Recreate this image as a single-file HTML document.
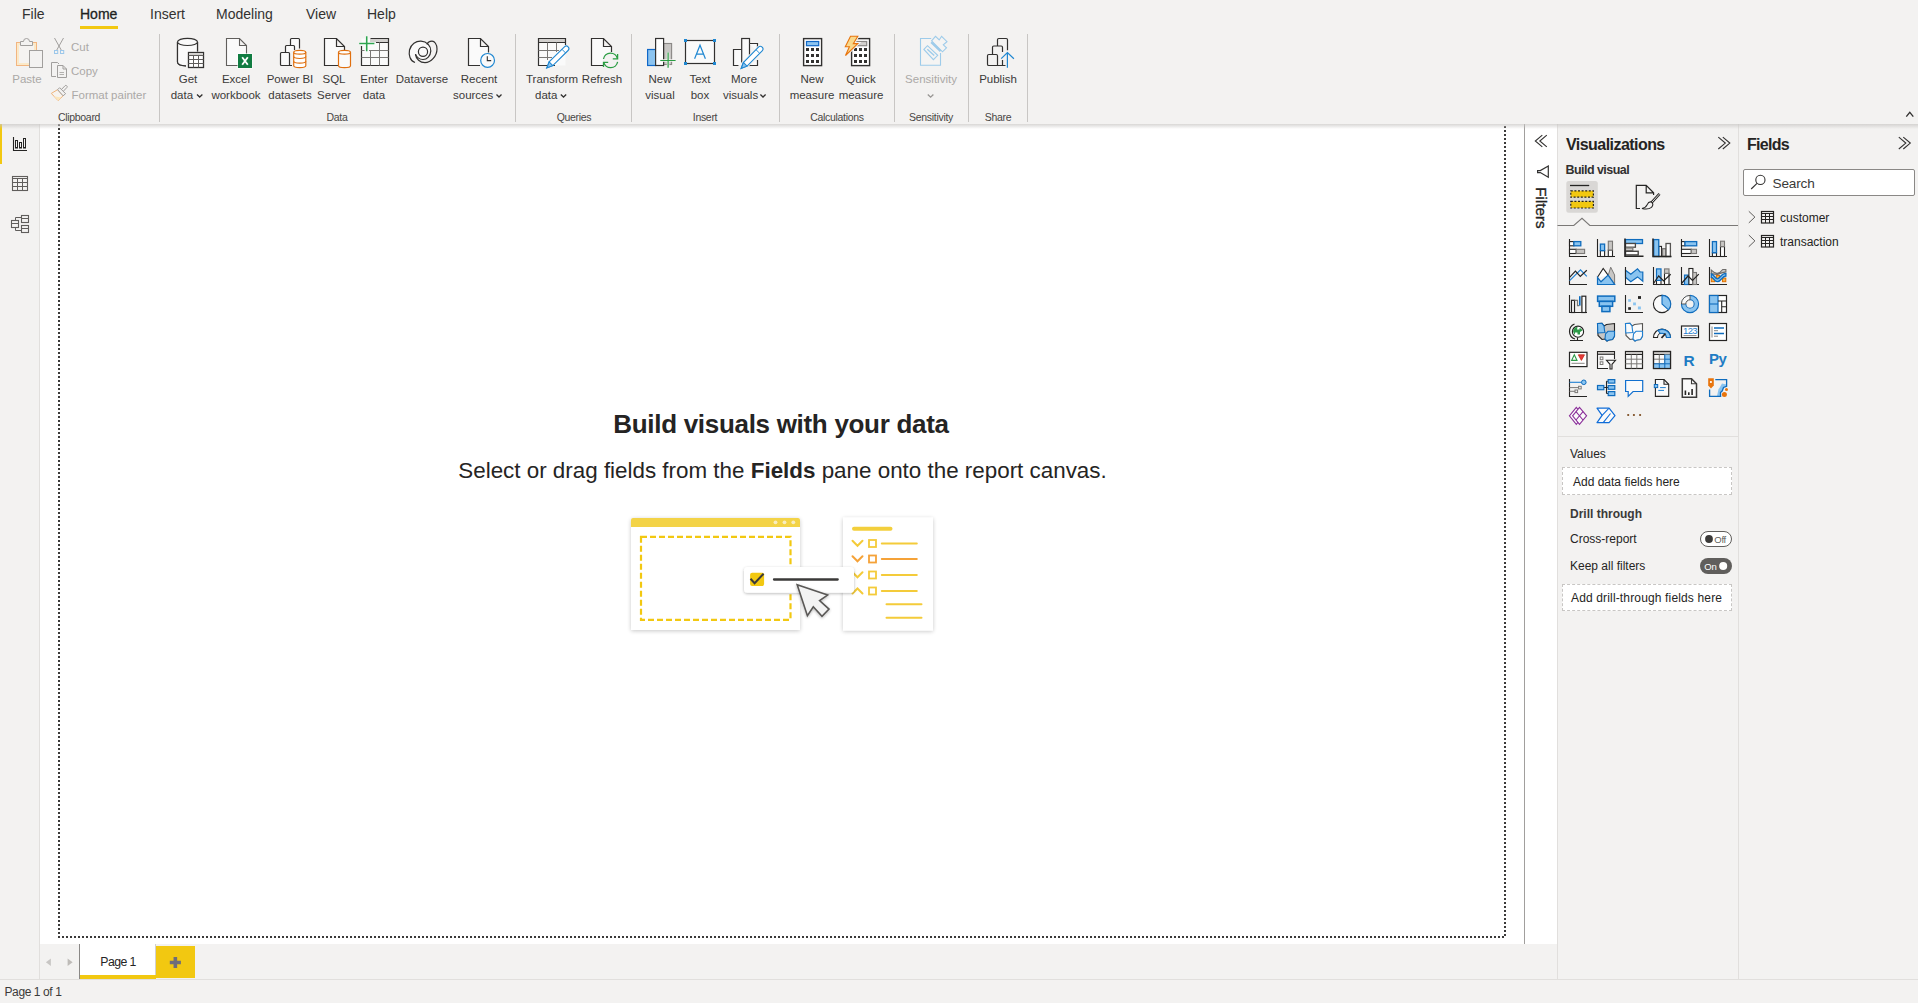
<!DOCTYPE html>
<html><head><meta charset="utf-8">
<style>
*{box-sizing:border-box;margin:0;padding:0}
html,body{width:1918px;height:1003px;overflow:hidden;background:#F3F2F1;font-family:"Liberation Sans",sans-serif;color:#252423;position:relative}
.a{position:absolute}
.t{position:absolute;white-space:nowrap}
.tab{font-size:14px;line-height:16px;top:6px;color:#323130}
.lbl{position:absolute;font-size:11.5px;line-height:16px;text-align:center;white-space:nowrap;width:100px;color:#3B3A39}
.grp{position:absolute;font-size:10.5px;letter-spacing:-0.3px;line-height:12px;text-align:center;white-space:nowrap;width:100px;top:111px;color:#484644}
.sep{position:absolute;top:34px;width:1px;height:88px;background:#C8C6C4}
.dis{color:#ABA9A7}
svg{position:absolute;overflow:visible}
</style></head><body>

<!-- ===== Top tabs ===== -->
<div class="t tab" style="left:22px">File</div>
<div class="t tab" style="left:80px;color:#201F1E;-webkit-text-stroke:0.3px #201F1E">Home</div>
<div class="a" style="left:80px;top:26px;width:38px;height:3px;background:#F2C811"></div>
<div class="t tab" style="left:150px">Insert</div>
<div class="t tab" style="left:216px">Modeling</div>
<div class="t tab" style="left:306px">View</div>
<div class="t tab" style="left:367px">Help</div>

<!-- ===== Ribbon ===== -->
<div id="ribbon">
<div class="sep" style="left:159px"></div>
<div class="sep" style="left:515px"></div>
<div class="sep" style="left:631px"></div>
<div class="sep" style="left:779px"></div>
<div class="sep" style="left:894px"></div>
<div class="sep" style="left:968px"></div>
<div class="sep" style="left:1027px"></div>

<div class="lbl dis" style="left:-23px;top:71px">Paste</div>
<div class="t dis" style="left:71px;top:39px;font-size:11.5px;line-height:16px">Cut</div>
<div class="t dis" style="left:71px;top:63px;font-size:11.5px;line-height:16px">Copy</div>
<div class="t dis" style="left:71.5px;top:87px;font-size:11.5px;line-height:16px">Format painter</div>
<div class="grp" style="left:29px">Clipboard</div>

<div class="lbl" style="left:138px;top:71px">Get</div>
<div class="t" style="left:170.7px;top:87px;font-size:11.5px;line-height:16px;color:#3B3A39">data</div>
<div class="lbl" style="left:186px;top:71px">Excel</div>
<div class="lbl" style="left:186px;top:87px">workbook</div>
<div class="lbl" style="left:240px;top:71px">Power BI</div>
<div class="lbl" style="left:240px;top:87px">datasets</div>
<div class="lbl" style="left:284px;top:71px">SQL</div>
<div class="lbl" style="left:284px;top:87px">Server</div>
<div class="lbl" style="left:324px;top:71px">Enter</div>
<div class="lbl" style="left:324px;top:87px">data</div>
<div class="lbl" style="left:372px;top:71px">Dataverse</div>
<div class="lbl" style="left:429px;top:71px">Recent</div>
<div class="t" style="left:453px;top:87px;font-size:11.5px;line-height:16px;color:#3B3A39">sources</div>
<div class="grp" style="left:287px">Data</div>

<div class="lbl" style="left:502px;top:71px">Transform</div>
<div class="t" style="left:535px;top:87px;font-size:11.5px;line-height:16px;color:#3B3A39">data</div>
<div class="lbl" style="left:552px;top:71px">Refresh</div>
<div class="grp" style="left:524px">Queries</div>

<div class="lbl" style="left:610px;top:71px">New</div>
<div class="lbl" style="left:610px;top:87px">visual</div>
<div class="lbl" style="left:650px;top:71px">Text</div>
<div class="lbl" style="left:650px;top:87px">box</div>
<div class="lbl" style="left:694px;top:71px">More</div>
<div class="t" style="left:723px;top:87px;font-size:11.5px;line-height:16px;color:#3B3A39">visuals</div>
<div class="grp" style="left:655px">Insert</div>

<div class="lbl" style="left:762px;top:71px">New</div>
<div class="lbl" style="left:762px;top:87px">measure</div>
<div class="lbl" style="left:811px;top:71px">Quick</div>
<div class="lbl" style="left:811px;top:87px">measure</div>
<div class="grp" style="left:787px">Calculations</div>

<div class="lbl dis" style="left:881px;top:71px">Sensitivity</div>
<div class="grp" style="left:881px">Sensitivity</div>

<div class="lbl" style="left:948px;top:71px">Publish</div>
<div class="grp" style="left:948px">Share</div>
</div>

<!-- ribbon shadow -->


<!-- ===== Left nav ===== -->
<div class="a" style="left:0;top:124px;width:40px;height:855px;background:#F3F2F1;border-right:1px solid #E1DFDD"></div>
<div class="a" style="left:0;top:124px;width:2px;height:40px;background:#F2C811"></div>

<!-- ===== Canvas ===== -->
<div class="a" style="left:40px;top:124px;width:1484px;height:820px;background:#fff"></div>


<div class="t" style="left:0;width:1562px;text-align:center;top:408px;font-size:26px;line-height:32px;font-weight:700;letter-spacing:-0.3px;color:#252423">Build visuals with your data</div>
<div class="t" style="left:0;width:1565px;text-align:center;top:456.5px;font-size:22.4px;line-height:28px;color:#252423">Select or drag fields from the <b>Fields</b> pane onto the report canvas.</div>

<!-- ===== Page tabs ===== -->
<div class="a" style="left:79px;top:944px;width:77px;height:35px;background:#fff;border-left:1px solid #8A8886;border-right:1px solid #D2D0CE"></div>
<div class="a" style="left:80px;top:975px;width:76px;height:4px;background:#F2C811"></div>
<div class="t" style="left:80px;width:76px;text-align:center;top:954px;font-size:12.3px;line-height:16px;letter-spacing:-0.6px;color:#252423">Page 1</div>
<div class="a" style="left:156px;top:946px;width:39px;height:32px;background:#F2C811"></div>

<!-- ===== Status bar ===== -->
<div class="a" style="left:0;top:979px;width:1918px;height:1px;background:#E1DFDD"></div>
<div class="t" style="left:4.5px;top:983.5px;font-size:12px;line-height:16px;letter-spacing:-0.4px;color:#3B3A39">Page 1 of 1</div>

<!-- ===== Filters strip ===== -->
<div class="a" style="left:1524px;top:124px;width:34px;height:820px;background:#fff;border-left:1px solid #A19F9D"></div>

<!-- ===== Visualizations pane ===== -->
<div class="a" style="left:1557px;top:124px;width:1px;height:855px;background:#E1DFDD"></div>
<div class="a" style="left:1738px;top:124px;width:1px;height:855px;background:#E1DFDD"></div>
<div class="t" style="left:1566px;top:135.5px;font-size:16px;line-height:18px;font-weight:700;letter-spacing:-0.55px">Visualizations</div>
<div class="t" style="left:1565.5px;top:163px;font-size:12.5px;line-height:14px;font-weight:700;letter-spacing:-0.55px;color:#323130">Build visual</div>

<div class="t" style="left:1570px;top:446px;font-size:12px;line-height:16px">Values</div>
<div class="a" style="left:1562px;top:467px;width:170px;height:28px;background:#fff;border:1px dashed #C8C6C4"></div>
<div class="t" style="left:1573px;top:474px;font-size:12px;line-height:16px">Add data fields here</div>
<div class="t" style="left:1570px;top:506px;font-size:12px;line-height:16px;font-weight:700;color:#3B3A39">Drill through</div>
<div class="t" style="left:1570px;top:531px;font-size:12px;line-height:16px">Cross-report</div>
<div class="t" style="left:1570px;top:558px;font-size:12px;line-height:16px">Keep all filters</div>
<div class="a" style="left:1562px;top:584px;width:170px;height:27px;background:#fff;border:1px dashed #C8C6C4"></div>
<div class="t" style="left:1571px;top:590px;font-size:12px;line-height:16px;letter-spacing:0.15px">Add drill-through fields here</div>

<div class="t" style="left:1510.9px;top:199.6px;width:60px;height:16px;text-align:center;font-size:15.2px;-webkit-text-stroke:0.35px #252423;line-height:16px;color:#252423;transform:rotate(90deg);transform-origin:50% 50%">Filters</div>
<!-- ===== Fields pane ===== -->
<div class="t" style="left:1747px;top:135.5px;font-size:16px;line-height:18px;font-weight:700;letter-spacing:-0.7px">Fields</div>
<div class="a" style="left:1743px;top:169px;width:172px;height:27px;background:#fff;border:1px solid #8A8886;border-radius:2px"></div>
<div class="t" style="left:1772.5px;top:175.5px;font-size:13.6px;line-height:16px;letter-spacing:-0.15px;color:#3B3A39">Search</div>
<div class="t" style="left:1780px;top:210px;font-size:12px;line-height:16px">customer</div>
<div class="t" style="left:1780px;top:234px;font-size:12px;line-height:16px">transaction</div>


<svg id="ov" width="1918" height="1003" style="left:0;top:0;pointer-events:none">
<!-- canvas dotted border -->
<path d="M59,124 V937 H1505 V124" fill="none" stroke="#3B3A39" stroke-width="2" stroke-dasharray="2 2"/>

<g fill="none" stroke-linejoin="miter">
<!-- Paste -->
<rect x="16.5" y="42.5" width="20" height="23" fill="#F5F3F1" stroke="#F2B580" stroke-width="1"/>
<rect x="18" y="44" width="17" height="20" fill="#F5F3F1" stroke="#FBE9C8" stroke-width="2"/>
<path d="M20.5,45.5 V41.5 H23.5 A3,3 0 0 1 29.5,41.5 H32.5 V45.5 Z" fill="#F3F2F1" stroke="#A19F9D" stroke-width="1"/>
<rect x="29.5" y="50.5" width="13" height="17" fill="#F3F2F1" stroke="#A19F9D" stroke-width="1"/>
<!-- Cut -->
<path d="M54.5,38 L61.5,50.5 M63.5,38 L56.5,50.5" stroke="#A19F9D" stroke-width="1"/>
<rect x="54.5" y="50.5" width="3.2" height="3" stroke="#9CC7EA" stroke-width="1"/>
<rect x="60.5" y="50.5" width="3.2" height="3" stroke="#9CC7EA" stroke-width="1"/>
<!-- Copy -->
<path d="M56,76.5 H51.5 V62.5 H57.5 L59,64" stroke="#A19F9D" stroke-width="1"/>
<path d="M57.5,77.5 V65.5 H63 L66.5,69 V77.5 Z M63,65.5 V69 H66.5" fill="#F3F2F1" stroke="#A19F9D" stroke-width="1"/>
<path d="M59.5,72.5 H64 M59.5,74.5 H64" stroke="#A19F9D" stroke-width="0.8"/>
<!-- Format painter -->
<path d="M51.3,93.4 L57.6,89.7 L63.1,95.8 L58.1,100.6 Z" fill="#F7F3EE" stroke="#F0B47A" stroke-width="1"/>
<path d="M53.8,96.2 L61.2,97.6 L58.1,100.4 Z" fill="#FBE6BC"/>
<path d="M61.3,89.6 L65.1,85.7 Q65.9,85 66.6,85.7 L67,86.1 Q67.6,86.8 66.9,87.5 L63.2,91.4" fill="#F3F2F1" stroke="#A19F9D" stroke-width="1"/>
<path d="M57.6,89.7 L59.6,87.7 L65.6,93.7 L63.1,95.8 Z" fill="#F3F2F1" stroke="#A19F9D" stroke-width="1"/>

<!-- Get data -->
<path d="M177.5,42 V62 Q177.5,65.5 186,65.8" stroke="#323130" stroke-width="1.2" fill="#FAFAFA"/>
<path d="M197.5,42 V51.5" stroke="#323130" stroke-width="1.2"/>
<path d="M177.5,42 V62 Q177.5,65.5 186,65.8 L188,52 H197.5 V42" fill="#FAFAFA" stroke="none"/>
<path d="M177.5,42 V62 Q177.5,65.5 186,65.8 M197.5,42 V51.5" stroke="#323130" stroke-width="1.2"/>
<ellipse cx="187.5" cy="41.9" rx="10" ry="3.6" fill="#FAFAFA" stroke="#323130" stroke-width="1.2"/>
<rect x="188.5" y="52.5" width="15" height="15" fill="#fff" stroke="#323130" stroke-width="1.3"/>
<rect x="189.2" y="53.2" width="13.6" height="2.4" fill="#D2D0CE"/>
<path d="M188.5,55.5 H203.5 M188.5,59.5 H203.5 M188.5,63.5 H203.5 M193.5,55.5 V67.5 M198.5,55.5 V67.5" stroke="#605E5C" stroke-width="1"/>
<path d="M197,94.5 L199.7,97 L202.4,94.5" stroke="#323130" stroke-width="1.3"/>

<!-- Excel -->
<path d="M238,65.5 H226.5 V38.5 H239.5 L246.5,45.5 V54 M239.5,38.5 V45.5 H246.5" fill="#FAFAFA" stroke="#605E5C" stroke-width="1.1"/>
<rect x="237.5" y="53.5" width="15" height="15" fill="#fff"/>
<rect x="238" y="54" width="14" height="14" fill="#107C41"/>
<path d="M242.2,57.3 L247.8,64.8 M247.8,57.3 L242.2,64.8" stroke="#fff" stroke-width="1.8"/>

<!-- Power BI datasets -->
<path d="M290.5,48.5 V39.5 Q290.5,38.5 291.5,38.5 H298.5 Q299.5,38.5 299.5,39.5 V48.5" fill="#FAFAFA" stroke="#323130" stroke-width="1.2"/>
<path d="M285.5,52.5 V46.5 Q285.5,45.5 286.5,45.5 H293.5 Q294.5,45.5 294.5,46.5 V50" fill="#FAFAFA" stroke="#323130" stroke-width="1.2"/>
<path d="M292,65.5 H281.5 Q280.5,65.5 280.5,64.5 V53.5 Q280.5,52.5 281.5,52.5 H288.5 Q289.5,52.5 289.5,53.5 V65.5" fill="#FAFAFA" stroke="#323130" stroke-width="1.2"/>
<path d="M293.7,52.3 V65.8 A6.05,1.9 0 0 0 305.8,65.8 V52.3" fill="#fff" stroke="#E07010" stroke-width="1.2"/>
<ellipse cx="299.75" cy="52.3" rx="6.05" ry="1.9" fill="#fff" stroke="#E07010" stroke-width="1.2"/>
<path d="M293.7,56.6 A6.05,1.9 0 0 0 305.8,56.6 M293.7,61.2 A6.05,1.9 0 0 0 305.8,61.2" stroke="#E07010" stroke-width="1.2"/>

<!-- SQL Server -->
<path d="M338,65.5 H324.5 V38.5 H336.5 L344.5,46.5 V50 M336.5,38.5 V46.5 H344.5" fill="#FAFAFA" stroke="#323130" stroke-width="1.2"/>
<path d="M338.5,52.3 V65.8 A6,1.9 0 0 0 350.5,65.8 V52.3" fill="#FAFAFA" stroke="#E07010" stroke-width="1.2"/>
<ellipse cx="344.5" cy="52.3" rx="6" ry="1.9" fill="#fff" stroke="#E07010" stroke-width="1.2"/>

<!-- Enter data -->
<rect x="361.5" y="38.5" width="27" height="27" fill="#FAFAFA" stroke="none"/>
<rect x="370" y="39" width="18" height="3.3" fill="#D2D0CE"/>
<path d="M361.5,46 V65.5 H388.5 V38.5 H370.5 M376,42.5 H388.5" stroke="#323130" stroke-width="1.2"/>
<path d="M370.5,50.5 V65.5 M379.5,42.5 V65.5 M369,50.5 H388.5 M361.5,57.5 H388.5 M361.5,50.5 H364.5" stroke="#7A7876" stroke-width="1"/>
<path d="M366.7,36.2 V51.3 M359.2,43.5 H374.4" stroke="#fff" stroke-width="3"/>
<path d="M366.7,36.2 V51.3 M359.2,43.5 H374.4" stroke="#2EA44F" stroke-width="1.6"/>

<!-- Dataverse -->
<g stroke="#323130" stroke-width="1.2" fill="none">
<path d="M415,62.5 C410,61 408.5,55 409.5,50 C411,44 416,41 421,41.2 C427,41.5 431,46 430.8,51 C430.5,56 427,59.5 423,59.5 C419.5,59.5 416,57 415.5,54" fill="#FAFAFA"/>
<path d="M415.5,54.5 C416,59 420,62.7 425,62.7 C431,62.7 437,56 437,49 C437,44 434.5,41.2 432,41.2 C429.5,41.2 427.5,43 427,44.5"/>
<circle cx="423" cy="51.7" r="4.6" fill="#FAFAFA"/>
</g>
<!-- Recent sources -->
<path d="M480,65.5 H468.5 V38.5 H480.5 L488.5,46.5 V52.5 M480.5,38.5 V46.5 H488.5" fill="#FAFAFA" stroke="#323130" stroke-width="1.2"/>
<circle cx="487.6" cy="60.4" r="6.9" fill="#FAFAFA" stroke="#1F87D1" stroke-width="1.2"/>
<path d="M487.3,56.2 V60.6 H491.2" stroke="#323130" stroke-width="1.1"/>
<path d="M496.5,94.5 L499,97 L501.5,94.5" stroke="#323130" stroke-width="1.3"/>

<!-- Transform data -->
<rect x="538.5" y="38.5" width="27" height="27" fill="#FAFAFA"/>
<rect x="539" y="39" width="26" height="3.3" fill="#D2D0CE"/>
<path d="M555,65.5 H538.5 V38.5 H565.5 V45 M538.5,42.5 H565.5" stroke="#323130" stroke-width="1.2"/>
<path d="M547.5,42.5 V60 M556.5,42.5 V52 M538.5,50.5 H559 M538.5,57.5 H552" stroke="#7A7876" stroke-width="1"/>
<g transform="translate(546.7,68) rotate(-44.7)">
<path d="M0,0 L6,-2.6 H27.5 A2.6,2.6 0 0 1 27.5,2.6 H6 Z" fill="#fff" stroke="#1F87D1" stroke-width="1.1"/>
<path d="M0.5,0 L6,-2.6 V2.6 Z" fill="#8CC4F0" stroke="#1F87D1" stroke-width="1"/>
<path d="M24,-2.6 V2.6" stroke="#1F87D1" stroke-width="0.9"/>
</g>
<path d="M560.8,94.5 L563.5,97 L566.2,94.5" stroke="#323130" stroke-width="1.3"/>

<!-- Refresh -->
<path d="M603,65.5 H591.5 V38.5 H603.5 L611.5,46.5 V52 M603.5,38.5 V46.5 H611.5" fill="#FAFAFA" stroke="#323130" stroke-width="1.2"/>
<circle cx="610.6" cy="60.4" r="7.6" fill="#F3F2F1" stroke="none"/>
<path d="M603.5,59 A7.1,7.1 0 0 1 617.4,58.6 M617.6,61.8 A7.1,7.1 0 0 1 603.7,62.2" stroke="#2A9D43" stroke-width="1.3"/>
<path d="M617.6,54 V58.8 H612.8 M603.5,67 V62.3 H608.2" stroke="#2A9D43" stroke-width="1.3"/>

<!-- New visual -->
<rect x="647.6" y="49.5" width="8" height="16" fill="#8CC4F0" stroke="#1068C8" stroke-width="1.2"/>
<rect x="663.6" y="43.5" width="8" height="21" fill="#C8C6C4" stroke="#8A8886" stroke-width="1.1"/>
<rect x="655.6" y="38.5" width="8" height="27" fill="#fff" stroke="#323130" stroke-width="1.2"/>
<path d="M668.1,52.5 V67.7 M660.3,60.5 H675.6" stroke="#F3F2F1" stroke-width="2.6"/>
<path d="M668.1,52.5 V67.7 M660.3,60.5 H675.6" stroke="#2A9D43" stroke-width="1.2"/>

<!-- Text box -->
<rect x="685.5" y="40.5" width="29" height="23" fill="#FAFAFA" stroke="#323130" stroke-width="1.2"/>
<rect x="684" y="39" width="3" height="3" fill="#1F87D1"/><rect x="713" y="39" width="3" height="3" fill="#1F87D1"/>
<rect x="684" y="62" width="3" height="3" fill="#1F87D1"/><rect x="713" y="62" width="3" height="3" fill="#1F87D1"/>
<path d="M694.6,58.8 L700,45.2 L705.4,58.8 M696.4,54.2 H703.6" stroke="#1F87D1" stroke-width="1.2"/>

<!-- More visuals -->
<path d="M741.7,65.5 H733.5 V49.5 H741.7" fill="#FAFAFA" stroke="#323130" stroke-width="1.2"/>
<rect x="741.7" y="38.5" width="7.8" height="27" fill="#FAFAFA" stroke="#323130" stroke-width="1.2"/>
<path d="M749.5,43.5 H757.5 V52 M749.5,65.5 H757.5 V60" fill="#FAFAFA" stroke="#323130" stroke-width="1.2"/>
<g transform="translate(741,68.6) rotate(-45.4)">
<path d="M-1,-4 H30 V4 H-1 Z" fill="#F3F2F1" stroke="none"/>
<path d="M0,0 L6,-2.6 H27.5 A2.6,2.6 0 0 1 27.5,2.6 H6 Z" fill="#fff" stroke="#1F87D1" stroke-width="1.1"/>
<path d="M0.5,0 L6,-2.6 V2.6 Z" fill="#8CC4F0" stroke="#1F87D1" stroke-width="1"/>
<path d="M24,-2.6 V2.6" stroke="#1F87D1" stroke-width="0.9"/>
</g>
<path d="M760.4,94.5 L763,97 L765.6,94.5" stroke="#323130" stroke-width="1.3"/>

<!-- New measure -->
<rect x="803.6" y="38.6" width="18" height="27" fill="#fff" stroke="#323130" stroke-width="1.4"/>
<rect x="806.5" y="41.5" width="12.2" height="4.2" fill="#8CC4F0" stroke="#1068C8" stroke-width="1.2"/>
<g fill="#323130">
<rect x="806" y="48" width="3" height="3"/><rect x="811" y="48" width="3" height="3"/><rect x="816" y="48" width="3" height="3"/>
<rect x="806" y="54" width="3" height="3"/><rect x="811" y="54" width="3" height="3"/><rect x="816" y="54" width="3" height="3"/>
<rect x="806" y="60" width="3" height="3"/><rect x="811" y="60" width="3" height="3"/><rect x="816" y="60" width="3" height="3"/>
</g>

<!-- Quick measure -->
<rect x="851.6" y="38.6" width="18" height="27" fill="#fff" stroke="#323130" stroke-width="1.4"/>
<rect x="854.5" y="41.5" width="12.2" height="4.2" fill="#D2D0CE" stroke="#8A8886" stroke-width="1.2"/>
<g fill="#323130">
<rect x="854" y="48" width="3" height="3"/><rect x="859" y="48" width="3" height="3"/><rect x="864" y="48" width="3" height="3"/>
<rect x="854" y="54" width="3" height="3"/><rect x="859" y="54" width="3" height="3"/><rect x="864" y="54" width="3" height="3"/>
<rect x="854" y="60" width="3" height="3"/><rect x="859" y="60" width="3" height="3"/><rect x="864" y="60" width="3" height="3"/>
</g>
<path d="M850.5,36.2 L857.8,36.2 L853.3,43.6 L857.8,43.6 L845.5,55.5 L849.4,46.7 L845.3,46.7 Z" fill="#F3F2F1" stroke="#F3F2F1" stroke-width="3"/>
<path d="M850.5,36.2 L857.8,36.2 L853.3,43.6 L857.8,43.6 L845.5,55.5 L849.4,46.7 L845.3,46.7 Z" fill="#F9D98C" stroke="#E8740C" stroke-width="1.1"/>

<!-- Sensitivity -->
<path d="M931.2,38.5 H920.5 V65.3 H940.5 V53.1" fill="#F5F4F3" stroke="#9DCBEA" stroke-width="1.1"/>
<path d="M923.9,49.4 L927.5,45.7 L937.7,55.3 L933.4,59.7 Z" fill="#F5F4F3" stroke="#9DCBEA" stroke-width="1.1"/>
<path d="M927.3,49.2 L934.2,55.6" stroke="#9DCBEA" stroke-width="1.4"/>
<path d="M931.6,40.8 L935.5,36.3 L939.2,40 L941.6,36.3 L947,41.6 L943.3,44.8 L946.5,47.8 L942.5,51.8 Z" fill="#F5F4F3" stroke="#9DCBEA" stroke-width="1.1"/>
<path d="M931.2,42.3 L940.6,51.1" stroke="#9DCBEA" stroke-width="2.2"/>
<path d="M927.8,94.5 L930.6,97.2 L933.4,94.5" stroke="#979593" stroke-width="1.3"/>

<!-- Publish -->
<path d="M997.5,50 V39.8 Q997.5,38.5 998.8,38.5 H1006.2 Q1007.5,38.5 1007.5,39.8 V50.2" fill="#F3F2F1" stroke="#323130" stroke-width="1.2"/>
<path d="M992.5,54.5 V47.3 Q992.5,46 993.8,46 H1001.2 Q1002.5,46 1002.5,47.3 V52" fill="#F3F2F1" stroke="#323130" stroke-width="1.2"/>
<path d="M1005.5,65.5 H988.8 Q987.5,65.5 987.5,64.2 V55.8 Q987.5,54.5 988.8,54.5 H996.2 Q997.5,54.5 997.5,55.8 V65.5 M1002.5,60 V65.5" fill="#F3F2F1" stroke="#323130" stroke-width="1.2"/>
<path d="M1007.4,52.8 V67.8 M1001.2,58.6 L1007.4,52.5 L1013.9,58.8" stroke="#1F87D1" stroke-width="1.2"/>

<!-- collapse chevron -->
<path d="M1906.3,116.6 L1909.8,112.3 L1913.3,116.6" stroke="#323130" stroke-width="1.3"/>
</g>


<g fill="none">
<!-- report icon -->
<path d="M13.5,137 V150.5 H27" stroke="#252423" stroke-width="1.1"/>
<rect x="15.5" y="140.5" width="2" height="7.5" stroke="#252423" stroke-width="1"/>
<rect x="19.5" y="142.5" width="2" height="5.5" stroke="#252423" stroke-width="1"/>
<rect x="23.5" y="138.5" width="2" height="9.5" stroke="#252423" stroke-width="1"/>
<!-- table icon -->
<rect x="12.5" y="176.5" width="15" height="14" stroke="#605E5C" stroke-width="1.1"/>
<path d="M12.5,178.5 H27.5 M12.5,182.5 H27.5 M12.5,186.5 H27.5 M17.5,178.5 V190.5 M22.5,178.5 V190.5" stroke="#605E5C" stroke-width="1"/>
<!-- model icon -->
<rect x="11.5" y="220.5" width="7" height="7" stroke="#605E5C" stroke-width="1.1"/>
<path d="M11.5,223.5 H18.5" stroke="#605E5C" stroke-width="1"/>
<rect x="21.5" y="215.5" width="7" height="7" stroke="#605E5C" stroke-width="1.1"/>
<path d="M21.5,218.5 H28.5" stroke="#605E5C" stroke-width="1"/>
<rect x="21.5" y="225.5" width="7" height="7" stroke="#605E5C" stroke-width="1.1"/>
<path d="M21.5,228.5 H28.5" stroke="#605E5C" stroke-width="1"/>
<path d="M15.5,220.5 V217.5 H21.5 M15.5,227.5 V230.5 H21.5" stroke="#605E5C" stroke-width="1"/>
<!-- page nav arrows -->
<path d="M50.9,958.4 L45.9,962.2 L50.9,966 Z" fill="#C8C6C4"/>
<path d="M67.6,958.4 L72.6,962.2 L67.6,966 Z" fill="#BEBBB8"/>
<!-- plus -->
<path d="M175.35,957.1 V967.9 M169.8,962.45 H180.9" stroke="#6E6D7A" stroke-width="3.6"/>
</g>


<defs>
<filter id="sh" x="-20%" y="-20%" width="140%" height="140%"><feGaussianBlur in="SourceAlpha" stdDeviation="2.2"/><feOffset dx="0" dy="1" result="b"/><feComponentTransfer><feFuncA type="linear" slope="0.22"/></feComponentTransfer><feMerge><feMergeNode/><feMergeNode in="SourceGraphic"/></feMerge></filter>
<filter id="sh2" x="-30%" y="-30%" width="160%" height="160%"><feGaussianBlur in="SourceAlpha" stdDeviation="1.6"/><feOffset dx="0" dy="1.2" result="b"/><feComponentTransfer><feFuncA type="linear" slope="0.28"/></feComponentTransfer><feMerge><feMergeNode/><feMergeNode in="SourceGraphic"/></feMerge></filter>
</defs>
<g>
<path d="M631,520 Q631,518 633,518 H798 Q800,518 800,520 V630 H631 Z" fill="#fff" filter="url(#sh)"/>
<path d="M631,520 Q631,518 633,518 H798 Q800,518 800,520 V527 H631 Z" fill="#F3D347"/>
<circle cx="775.5" cy="522.3" r="1.9" fill="#F8EDC0"/><circle cx="784.5" cy="522.3" r="1.9" fill="#F8EDC0"/><circle cx="793.3" cy="522.3" r="1.9" fill="#F8EDC0"/>
<rect x="641" y="536.8" width="149.5" height="83" fill="none" stroke="#F2C811" stroke-width="2.2" stroke-dasharray="6 3" stroke-linecap="butt"/>
<rect x="843" y="517.5" width="90" height="113" fill="#fff" filter="url(#sh)"/>
<g fill="none" stroke-width="2" stroke-linecap="round">
<path d="M854,528.7 H890.5" stroke="#F3CF3C" stroke-width="4"/>
<path d="M852.5,540.8 L857.5,545.8 L862.5,540.8 M881.8,543.5 H916.8" stroke="#F4CB3A"/>
<rect x="869" y="540" width="7" height="7" stroke="#F4CB3A" stroke-width="1.8"/>
<path d="M852.5,556.3 L857.5,561.3 L862.5,556.3 M881.8,559 H916.8" stroke="#F5A238"/>
<rect x="869" y="555.5" width="7" height="7" stroke="#F5A238" stroke-width="1.8"/>
<path d="M852.5,572.3 L857.5,577.3 L862.5,572.3 M881.8,575 H916.8" stroke="#F4CB3A"/>
<rect x="869" y="571.5" width="7" height="7" stroke="#F4CB3A" stroke-width="1.8"/>
<path d="M852.5,593.5 L857.5,588.5 L862.5,593.5 M881.8,591 H916.8" stroke="#F4CB3A"/>
<rect x="869" y="587.5" width="7" height="7" stroke="#F4CB3A" stroke-width="1.8"/>
<path d="M886.5,604.2 H921.5 M886.5,617.8 H921.5" stroke="#F4CB3A"/>
</g>
<rect x="744" y="567" width="110" height="25.7" rx="3.5" fill="#fff" filter="url(#sh2)"/>
<rect x="750.1" y="572.8" width="14" height="13.3" rx="2" fill="#F2C811"/>
<path d="M750.5,578.8 L754.6,583.2 L763.6,573.8" fill="none" stroke="#3B3A39" stroke-width="2"/>
<path d="M774,579.5 H837.7" stroke="#3B3A39" stroke-width="2.3" stroke-linecap="round"/>
<path d="M797.2,584.7 L827.6,595.1 L819.6,600.7 L829,609.1 L822,616.4 L813.3,606.7 L807.4,615.7 Z" fill="#F3F3F3" stroke="#5A5856" stroke-width="1.6" stroke-linejoin="miter" filter="url(#sh2)"/>
</g>


<g fill="none">
<!-- filter strip -->
<path d="M1542.3,135.1 L1535.3,141 L1542.3,146.9 M1546.8,135.1 L1539.8,141 L1546.8,146.9" stroke="#323130" stroke-width="1.1"/>
<path d="M1548.3,166 L1540.3,170.6 H1537.6 V172.6 H1540.3 L1548.3,177.2 Z" stroke="#323130" stroke-width="1.2" stroke-linejoin="miter"/>
<!-- viz >> -->
<path d="M1718.3,137.2 L1725.3,143.1 L1718.3,149 M1722.8,137.2 L1729.8,143.1 L1722.8,149" stroke="#323130" stroke-width="1.1"/>
<path d="M1898.8,137.2 L1905.8,143.1 L1898.8,149 M1903.3,137.2 L1910.3,143.1 L1903.3,149" stroke="#323130" stroke-width="1.1"/>
<!-- build visual selected -->
<rect x="1566.3" y="181" width="31.5" height="31.8" rx="2.5" fill="#D9D7D5"/>
<path d="M1570,185.5 H1589.2" stroke="#252423" stroke-width="1.3"/>
<rect x="1570.8" y="190.8" width="22.6" height="6.4" fill="#F2C811" stroke="#252423" stroke-width="1.2" stroke-dasharray="2 1.6"/>
<rect x="1570.8" y="201.4" width="22.6" height="6.6" fill="#F2C811" stroke="#252423" stroke-width="1.2" stroke-dasharray="2 1.6"/>
<!-- format icon -->
<path d="M1640,208.5 H1636.3 V185.3 H1646.2 L1653.6,192.8 V195 M1646.2,185.3 V192.9 H1653.6" stroke="#252423" stroke-width="1.2"/>
<path d="M1659.5,193.9 L1650.8,203.4" stroke="#252423" stroke-width="2.6"/>
<path d="M1659.3,194.1 L1651.2,203" stroke="#F3F2F1" stroke-width="0.9"/>
<path d="M1651.5,202 Q1654.2,204.5 1651.5,207.4 Q1648,210 1642,208.5 Q1646,207.5 1647.2,204.6 Q1648.7,201.2 1651.5,202 Z" fill="#F3F2F1" stroke="#252423" stroke-width="1.1"/>
<!-- notch line -->
<path d="M1557.5,225.5 H1573.8 L1582,218.3 L1589.8,225.5 H1738" stroke="#7A7876" stroke-width="1.1"/>
<!-- values separator -->
<path d="M1557.5,436.5 H1738" stroke="#E1DFDD" stroke-width="1"/>
<!-- toggles -->
<rect x="1700.5" y="531.5" width="31" height="15" rx="7.5" fill="#fff" stroke="#605E5C" stroke-width="1"/>
<circle cx="1709" cy="539" r="3.9" fill="#3B3A39"/>
<rect x="1700" y="558" width="32" height="16" rx="8" fill="#605E5C"/>
<circle cx="1723.2" cy="566" r="4" fill="#fff"/>
<text x="1714.3" y="542.6" font-family="Liberation Sans" font-size="9.5" fill="#605E5C" letter-spacing="-0.3">Off</text>
<text x="1704.3" y="569.6" font-family="Liberation Sans" font-size="9.5" fill="#fff" letter-spacing="-0.3">On</text>
<!-- search -->
<circle cx="1760.4" cy="179.9" r="4.6" stroke="#323130" stroke-width="1.1"/>
<path d="M1757,183.4 L1751.2,189" stroke="#323130" stroke-width="1.1"/>
<!-- fields rows -->
<path d="M1748.8,211.3 L1754.9,217.1 L1748.8,222.9 M1748.8,235 L1754.9,240.9 L1748.8,246.7" stroke="#605E5C" stroke-width="1"/>
<g stroke="#252423">
<rect x="1761.5" y="211.5" width="12" height="11.5" stroke-width="1.2"/>
<path d="M1761.5,213.5 H1773.5 M1761.5,216.5 H1773.5 M1761.5,219.5 H1773.5 M1765.5,213.5 V223 M1769.5,213.5 V223" stroke-width="1"/>
<rect x="1761.5" y="235.5" width="12" height="11.5" stroke-width="1.2"/>
<path d="M1761.5,237.5 H1773.5 M1761.5,240.5 H1773.5 M1761.5,243.5 H1773.5 M1765.5,237.5 V247 M1769.5,237.5 V247" stroke-width="1"/>
</g>
</g>

<g id="vizg"><g><g transform="translate(1569,239)"><path d="M0.5,0 V17.5 H18" stroke="#252423" stroke-width="1.1" fill="none"/><rect x="0.5" y="2.6" width="4.4" height="4.2" fill="#FFFFFF" stroke="#252423" stroke-width="1.1"/><rect x="4.9" y="2.6" width="6.9" height="4.2" fill="#8AC4F0" stroke="#0F6CBD" stroke-width="1.3"/><rect x="0.5" y="10.3" width="6.7" height="4.2" fill="#FFFFFF" stroke="#252423" stroke-width="1.1"/><rect x="7.2" y="10.3" width="8.4" height="4.2" fill="#C8C6C4" stroke="#7A7876" stroke-width="1.1"/></g>
<g transform="translate(1597,239)"><path d="M0.5,0 V17.5 H18" stroke="#252423" stroke-width="1.1" fill="none"/><rect x="3.4" y="11.6" width="4.2" height="5.9" fill="#FFFFFF" stroke="#252423" stroke-width="1.1"/><rect x="3.4" y="5.1" width="4.2" height="6.5" fill="#8AC4F0" stroke="#0F6CBD" stroke-width="1.3"/><rect x="11.3" y="11" width="4.2" height="6.5" fill="#FFFFFF" stroke="#252423" stroke-width="1.1"/><rect x="11.3" y="2.2" width="4.2" height="8.8" fill="#C8C6C4" stroke="#7A7876" stroke-width="1.1"/></g>
<g transform="translate(1625,239)"><rect x="0.5" y="0.6" width="17" height="3.9" fill="#8AC4F0" stroke="#0F6CBD" stroke-width="1.3"/><rect x="0.5" y="4.5" width="9.9" height="3.7" fill="#FFFFFF" stroke="#4A4846" stroke-width="1.3"/><rect x="0.5" y="8.9" width="7.3" height="2.8" fill="#C8C6C4" stroke="#7A7876" stroke-width="1.3"/><rect x="0.5" y="12.3" width="12.7" height="3.6" fill="#FFFFFF" stroke="#4A4846" stroke-width="1.4"/><path d="M0,-0.5 V17.3 H18.5" stroke="#252423" stroke-width="1.6" fill="none"/></g>
<g transform="translate(1653,239)"><rect x="5.75" y="7.4" width="2.75" height="10.1" fill="#FFFFFF" stroke="#252423" stroke-width="1.1"/><rect x="9.5" y="9.7" width="3.5" height="7.8" fill="#C8C6C4" stroke="#7A7876" stroke-width="1.3"/><rect x="13" y="4.5" width="4.4" height="13" fill="#FFFFFF" stroke="#555351" stroke-width="1.3"/><rect x="0.75" y="0.6" width="5" height="16.9" fill="#8AC4F0" stroke="#0F6CBD" stroke-width="1.3"/><path d="M0,-0.5 V17.5 H18.5" stroke="#252423" stroke-width="1.6" fill="none"/></g>
<g transform="translate(1681,239)"><path d="M0.5,0 V17.5 H18" stroke="#252423" stroke-width="1.1" fill="none"/><rect x="0.5" y="2.6" width="3.5" height="4.2" fill="#FFFFFF" stroke="#252423" stroke-width="1.1"/><rect x="4" y="2.6" width="11.7" height="4.2" fill="#8AC4F0" stroke="#0F6CBD" stroke-width="1.3"/><rect x="0.5" y="10.3" width="9.8" height="4.2" fill="#FFFFFF" stroke="#252423" stroke-width="1.1"/><rect x="10.3" y="10.3" width="5.2" height="4.2" fill="#C8C6C4" stroke="#7A7876" stroke-width="1.1"/></g>
<g transform="translate(1709,239)"><path d="M0.5,0 V17.5 H18" stroke="#252423" stroke-width="1.1" fill="none"/><rect x="3.4" y="13.7" width="4.1" height="3.8" fill="#FFFFFF" stroke="#252423" stroke-width="1.1"/><rect x="3.4" y="2.6" width="4.1" height="11.1" fill="#8AC4F0" stroke="#0F6CBD" stroke-width="1.3"/><rect x="11.5" y="7.6" width="4" height="9.9" fill="#FFFFFF" stroke="#252423" stroke-width="1.1"/><rect x="11.5" y="2.2" width="4" height="5.4" fill="#C8C6C4" stroke="#7A7876" stroke-width="1.1"/></g>
<g transform="translate(1569,267)"><path d="M0.5,0 V17.5 H18" stroke="#252423" stroke-width="1.1" fill="none"/><path d="M0.6,13.6 L11.5,2.8 L17.8,9.3" stroke="#1F7FD1" stroke-width="1.2" fill="none"/><path d="M0.6,10.3 L6.4,4.1 L11.3,9.4 L17.8,3.2" stroke="#252423" stroke-width="1.2" fill="none"/></g>
<g transform="translate(1597,267)"><path d="M0.5,10.3 L6.2,1.5 L11.3,8.4 Z" fill="#FFFFFF"/><path d="M0.5,10.3 L6.2,1.5 L11.3,8.4" fill="none" stroke="#252423" stroke-width="1.1"/><path d="M11.3,8.1 L13.7,0.2 L17.6,8 V17.5 Z" fill="#C8C6C4" stroke="#7A7876" stroke-width="1"/><path d="M0.5,10.5 L4,14.8 L11.1,8.1 L17.6,17.5 H0.5 Z" fill="#8AC4F0" stroke="#0F6CBD" stroke-width="1.2"/></g>
<g transform="translate(1625,267)"><path d="M0.5,10.3 L5.8,14.8 L12.5,9.9 L17.8,14.3 V17.5 H0.5 Z" fill="#FAFAFA"/><path d="M0.5,3.2 L5.8,7.2 L12.5,1.9 L15.1,5 H17.8 V14.3 L12.5,9.9 L5.8,14.8 L0.5,10.3 Z" fill="#8AC4F0" stroke="#0F6CBD" stroke-width="1.2"/><path d="M0.5,0 V17.5 H18" stroke="#252423" stroke-width="1.1" fill="none"/></g>
<g transform="translate(1653,267)"><path d="M0.5,0 V17.5 H18" stroke="#252423" stroke-width="1.1" fill="none"/><rect x="3.5" y="13.4" width="4.5" height="4.1" fill="#FFFFFF" stroke="#252423" stroke-width="1.1"/><rect x="3.5" y="1.9" width="4.5" height="11.5" fill="#8AC4F0" stroke="#0F6CBD" stroke-width="1.2"/><rect x="11.5" y="6.3" width="4.5" height="11.2" fill="#FFFFFF" stroke="#252423" stroke-width="1.1"/><rect x="11.5" y="1.9" width="4.5" height="4.4" fill="#C8C6C4" stroke="#7A7876" stroke-width="1.1"/><path d="M0.5,16.5 L5.7,9 L10.6,13.9 L17.7,7.2" stroke="#252423" stroke-width="1.2" fill="none"/></g>
<g transform="translate(1681,267)"><path d="M0.5,0 V17.5 H18" stroke="#252423" stroke-width="1.1" fill="none"/><rect x="3.5" y="8.1" width="4.4" height="9.4" fill="#8AC4F0" stroke="#0F6CBD" stroke-width="1.2"/><rect x="7.9" y="1.5" width="4" height="16" fill="#FFFFFF" stroke="#252423" stroke-width="1.1"/><rect x="11.9" y="5.5" width="3.6" height="12" fill="#C8C6C4" stroke="#7A7876" stroke-width="1.1"/><path d="M0.5,16.5 L7,9 L11.5,13.5 L17.8,7.2" stroke="#252423" stroke-width="1.2" fill="none"/></g>
<g transform="translate(1709,267)"><path d="M0.5,0 V17.5 H18" stroke="#252423" stroke-width="1.1" fill="none"/><rect x="2.3" y="11.1" width="3.3" height="3.6" fill="#F5B04A" stroke="#E07000" stroke-width="1"/><rect x="13.5" y="11.1" width="3.3" height="3.6" fill="#F5B04A" stroke="#E07000" stroke-width="1"/><rect x="7.3" y="8.4" width="3.3" height="3" fill="#F5B04A" stroke="#E07000" stroke-width="1"/><path d="M2.3,3.2 Q8.5,9.5 13.7,2.5 H16.9 V4.9 Q11,6 8.5,7.4 Q5,7 2.3,6.6 Z" fill="#C8C6C4" stroke="#6E6C6A" stroke-width="1.1"/><path d="M2.3,7 C5,7.5 6,11.8 8.5,11.8 C11,11.8 12,6.3 16.9,6.3 V9 C13,9 12,14.7 8.5,14.7 C5,14.7 5,10.4 2.3,10.4 Z" fill="#8AC4F0" stroke="#0F6CBD" stroke-width="1.3"/></g>
<g transform="translate(1569,295)"><path d="M0.5,0 V17.5 H18" stroke="#252423" stroke-width="1.1" fill="none"/><rect x="2.5" y="5.3" width="3" height="12.2" fill="#FFFFFF" stroke="#252423" stroke-width="1.2"/><path d="M5.5,5.3 H8.5 V10.6 H10.3" fill="none" stroke="#7A7876" stroke-width="1.2"/><rect x="10" y="1.2" width="1.6" height="9.4" fill="#0F6CBD"/><rect x="12.9" y="1.2" width="3.9" height="16.3" fill="#FFFFFF" stroke="#252423" stroke-width="1.2"/></g>
<g transform="translate(1597,295)"><rect x="0.6" y="1.1" width="17.2" height="5.3" fill="#8AC4F0" stroke="#0F6CBD" stroke-width="1.5"/><rect x="2.3" y="6.4" width="13.3" height="4.9" fill="#8AC4F0" stroke="#0F6CBD" stroke-width="1.5"/><rect x="4.9" y="11.3" width="8" height="5.3" fill="#8AC4F0" stroke="#0F6CBD" stroke-width="1.5"/></g>
<g transform="translate(1625,295)"><path d="M0.5,0 V17.5 H18" stroke="#252423" stroke-width="1.1" fill="none"/><rect x="13" y="1.1" width="3" height="2.8" fill="#252423"/><rect x="3.2" y="12.2" width="2.7" height="2.6" fill="#252423"/><rect x="3.2" y="4.2" width="2.7" height="2.6" fill="#8AC4F0"/><rect x="8.1" y="7.5" width="2.8" height="2.8" fill="#8AC4F0"/><rect x="12.9" y="11.5" width="3" height="2.9" fill="#8AC4F0"/></g>
<g transform="translate(1653,295)"><circle cx="9" cy="9" r="8.6" fill="#FAFAFA" stroke="#252423" stroke-width="1.1"/><path d="M9,9 V0.4 A8.6,8.6 0 0 1 15.4,14.8 Z" fill="#8AC4F0" stroke="#0F6CBD" stroke-width="1.1"/></g>
<g transform="translate(1681,295)"><circle cx="9" cy="9" r="6.7" fill="none" stroke="#8AC4F0" stroke-width="4.2"/><path d="M0.4,9 A8.6,8.6 0 0 1 9,0.4 V4.8 A4.2,4.2 0 0 0 4.8,9 Z" fill="#FAFAFA" stroke="#555351" stroke-width="1"/><path d="M9,0.4 A8.6,8.6 0 1 1 0.4,9 M9,4.8 A4.2,4.2 0 1 1 4.8,9" fill="none" stroke="#0F6CBD" stroke-width="1.1"/></g>
<g transform="translate(1709,295)"><rect x="0.5" y="0.5" width="17" height="17" fill="#FFFFFF" stroke="#252423" stroke-width="1.2"/><rect x="0.5" y="0.5" width="8.5" height="17" fill="#8AC4F0" stroke="#0F6CBD" stroke-width="1.2"/><path d="M0.5,9 H9" stroke="#0F6CBD" stroke-width="1.1" fill="none"/><path d="M9,6 H17.5 M12.7,6 V17.5 M12.7,11.7 H17.5" stroke="#252423" stroke-width="1.1" fill="none"/></g>
<g transform="translate(1569,323)"><path d="M6,16 A8,8 0 0 1 5.5,1" fill="none" stroke="#252423" stroke-width="1.2"/><circle cx="9" cy="8.7" r="5.6" fill="#fff" stroke="#252423" stroke-width="1.1"/><path d="M5.5,5 Q7,3.5 8.5,4 L8,6.5 H10.5 V5 Q12.5,5 13.5,7.5 L11,9 V11.5 H8.5 V9.5 H6 V12 Q4.5,10 4,8 Z" fill="#2E9A48"/><path d="M1,17.5 H14 M8.5,14.5 V17.5" stroke="#252423" stroke-width="1.1" fill="none"/></g>
<g transform="translate(1597,323)"><path d="M0.5,0.5 L5,0.3 L7,3 L9.5,1.5 L17.5,0.5 V13 L15.5,16.5 L12,17 L10,18 L8,16 L5,16.5 L1,12.5 Z" fill="#C8C6C4" stroke="#252423" stroke-width="1.1"/><path d="M0.5,0.5 L5,0.3 L7,3 L7.5,7.5 L8,9.5 L0.8,10 Z" fill="#8AC4F0" stroke="#0F6CBD" stroke-width="1.1"/><path d="M17.5,8.3 V13 L15.5,16.5 L12,17 L10,18 L8,16 L8.5,11 L11,8.3 Z" fill="#8AC4F0" stroke="#0F6CBD" stroke-width="1.1"/></g>
<g transform="translate(1625,323)"><path d="M0.5,0.5 L5,0.3 L7,3 L9.5,1.5 L17.5,0.5 V13 L15.5,16.5 L12,17 L10,18 L8,16 L5,16.5 L1,12.5 Z" fill="#FAFAFA" stroke="#555351" stroke-width="1.1"/><path d="M0.5,0.5 L5,0.3 L7,3 L7.5,7.5 L8,9.5 L0.8,10 Z" fill="#FAFAFA" stroke="#1F7FD1" stroke-width="1.1"/><path d="M17.5,8.3 V13 L15.5,16.5 L12,17 L10,18 L8,16 L8.5,11 L11,8.3 Z" fill="#FAFAFA" stroke="#1F7FD1" stroke-width="1.1"/></g>
<g transform="translate(1653,323)"><path d="M0.5,14.5 A8.5,8.5 0 0 1 17.5,14.5 H13.5 A4.5,4.5 0 0 0 4.5,14.5 Z" fill="#FAFAFA" stroke="#252423" stroke-width="1.1"/><path d="M5,7.5 A8.5,8.5 0 0 1 17.5,14.5 H13.5 A4.5,4.5 0 0 0 7.5,10.5 Z" fill="#8AC4F0" stroke="#0F6CBD" stroke-width="1.1"/><path d="M8.5,15 L12.5,10.5" stroke="#252423" stroke-width="1.8"/></g>
<g transform="translate(1681,323)"><rect x="0.5" y="3" width="17" height="11.6" fill="#FFFFFF" stroke="#252423" stroke-width="1.2"/><text x="9" y="11.2" font-family="Liberation Sans" font-size="9.5" text-anchor="middle" fill="#1F7FD1" letter-spacing="-0.6">123</text><path d="M2.5,12.6 H15.5" stroke="#7A7876" stroke-width="0.9"/></g>
<g transform="translate(1709,323)"><rect x="0.5" y="0.5" width="17" height="17" fill="#FFFFFF" stroke="#252423" stroke-width="1.2"/><path d="M3,3.5 V14.5" stroke="#7A7876" stroke-width="0.9"/><path d="M5,5 H15 M5,10.5 H15" stroke="#0F6CBD" stroke-width="1.5"/><path d="M5,7.7 H9 M5,13.2 H9" stroke="#7A7876" stroke-width="0.9"/></g>
<g transform="translate(1569,351)"><rect x="0.5" y="1.3" width="17.5" height="14.3" fill="#FFFFFF" stroke="#252423" stroke-width="1.2"/><path d="M2.6,9.4 L5.3,3.8 L8,9.4 Z" fill="none" stroke="#2E9A48" stroke-width="1.1"/><path d="M9.3,3.8 H15.5 L12.4,9.4 Z" fill="#E83A3A" stroke="#C42B1C" stroke-width="0.8"/><path d="M2.5,12.3 H15.6" stroke="#7A7876" stroke-width="0.9"/></g>
<g transform="translate(1597,351)"><path d="M11,17.5 H0.5 V0.5 H17.5 V8" fill="#FAFAFA" stroke="#252423" stroke-width="1.1"/><rect x="1" y="1" width="16" height="2.2" fill="#C8C6C4"/><path d="M0.5,3.3 H17.5" stroke="#252423" stroke-width="1"/><rect x="3.2" y="6" width="2.7" height="2.7" fill="none" stroke="#7A7876" stroke-width="1"/><rect x="3.2" y="10.8" width="2.7" height="2.7" fill="none" stroke="#7A7876" stroke-width="1"/><path d="M9.5,9.3 H18.5 L15,13.3 V18 H13 V13.3 Z" fill="#FAFAFA" stroke="#252423" stroke-width="1.1"/></g>
<g transform="translate(1625,351)"><rect x="0.5" y="0.5" width="17" height="17" fill="#FAFAFA" stroke="#252423" stroke-width="1.2"/><rect x="1" y="1" width="16" height="2.3" fill="#C8C6C4"/><path d="M0.5,3.5 H17.5" stroke="#252423" stroke-width="1"/><path d="M0.5,8.2 H17.5 M0.5,12.8 H17.5 M6.3,3.5 V17.5 M11.8,3.5 V17.5" stroke="#7A7876" stroke-width="1"/></g>
<g transform="translate(1653,351)"><rect x="0.5" y="0.5" width="17" height="17" fill="#FAFAFA" stroke="#252423" stroke-width="1.2"/><rect x="1" y="1" width="16" height="2.3" fill="#C8C6C4"/><path d="M0.5,3.5 H17.5" stroke="#252423" stroke-width="1"/><path d="M0.5,8.2 H17.5 M0.5,12.8 H17.5 M6.3,3.5 V17.5 M11.8,3.5 V17.5" stroke="#7A7876" stroke-width="1"/><rect x="11.8" y="3.5" width="5.7" height="14" fill="#8AC4F0"/><rect x="0.5" y="12.8" width="17" height="4.7" fill="#8AC4F0"/><path d="M0.5,12.8 H17.5 M11.8,3.5 V17.5 M6.3,12.8 V17.5 M11.8,8.2 H17.5" stroke="#0F6CBD" stroke-width="1"/><rect x="0.5" y="0.5" width="17" height="17" fill="none" stroke="#252423" stroke-width="1.2"/></g>
<g transform="translate(1681,351)"><text x="8" y="14.8" font-family="Liberation Sans" font-weight="700" font-size="15.5" text-anchor="middle" fill="#1F7CC4">R</text></g>
<g transform="translate(1709,351)"><text x="8.7" y="13.3" font-family="Liberation Sans" font-weight="700" font-size="15" text-anchor="middle" fill="#1F7CC4" letter-spacing="-0.5">Py</text></g>
<g transform="translate(1569,379)"><path d="M0.5,0 V17.5 H18" stroke="#252423" stroke-width="1.1" fill="none"/><path d="M0.5,3.3 H12.5 M0.5,8.6 H9.5 M0.5,12.3 H6" fill="none" stroke-width="1"/><path d="M0.5,3.3 H12.5" stroke="#1F7FD1" stroke-width="1.1"/><path d="M0.5,8.6 H9.5 M0.5,12.3 H6" stroke="#7A7876" stroke-width="1"/><circle cx="14.8" cy="3.3" r="2.3" fill="#8AC4F0" stroke="#0F6CBD" stroke-width="1"/><rect x="9.6" y="7.3" width="2.6" height="2.6" fill="none" stroke="#7A7876" stroke-width="1"/><rect x="6" y="11" width="2.6" height="2.6" fill="none" stroke="#7A7876" stroke-width="1"/></g>
<g transform="translate(1597,379)"><path d="M6.8,8.5 H9.5 M9.5,2.3 V14.5 M9.5,2.3 H11.2 M9.5,8.5 H11.2 M9.5,14.5 H11.2" stroke="#252423" stroke-width="1.1" fill="none"/><rect x="0.5" y="6.5" width="6.3" height="4.2" fill="#8AC4F0" stroke="#0F6CBD" stroke-width="1.2"/><rect x="11.2" y="0.6" width="6.6" height="3.5" fill="#8AC4F0" stroke="#0F6CBD" stroke-width="1.2"/><rect x="11.2" y="6.6" width="6.6" height="3.7" fill="#8AC4F0" stroke="#0F6CBD" stroke-width="1.2"/><rect x="11.2" y="12.6" width="6.6" height="4" fill="#8AC4F0" stroke="#0F6CBD" stroke-width="1.2"/></g>
<g transform="translate(1625,379)"><path d="M0.6,1.5 H17.7 V12.5 H8.1 L3.2,17.4 V12.5 H0.6 Z" fill="#FAFAFA" stroke="#1170CF" stroke-width="1.2"/></g>
<g transform="translate(1653,379)"><path d="M2.4,9 V17.4 H15.7 V5.3 L11,0.5 H2.4 V5" fill="#FAFAFA" stroke="#252423" stroke-width="1.1"/><path d="M11,0.5 V5.3 H15.7" fill="none" stroke="#252423" stroke-width="1.1"/><rect x="1.3" y="5.5" width="3.4" height="3.1" fill="#8AC4F0" stroke="#0F6CBD" stroke-width="1"/><path d="M7.1,8.6 H12.8 M5.3,11.4 H11" stroke="#1F7FD1" stroke-width="1"/></g>
<g transform="translate(1681,379)"><path d="M1.3,18.2 V-0.2 H10.5 L15.5,4.8 V18.2 Z" fill="#FAFAFA" stroke="#3B3A39" stroke-width="1.5"/><path d="M10.5,-0.2 V4.8 H15.5" fill="none" stroke="#3B3A39" stroke-width="1.1"/><rect x="3.6" y="11.5" width="1.6" height="4.5" fill="#252423"/><rect x="7" y="13.3" width="1.6" height="2.7" fill="#252423"/><rect x="10.3" y="10" width="1.6" height="6" fill="#252423"/></g>
<g transform="translate(1709,379)"><path d="M8,17.3 L9.5,10 L10.3,9.3 L13,4.5 L17.3,5.5 V7.3 L14.5,8.5 L13.3,11.8 L11.5,13.5 L11.6,17.3 Z" fill="#8AC4F0"/><path d="M6.3,0.6 H17.6 V7.3 L14.5,8.5 L13.3,11.8 L11.5,13.5 L11.6,17.3 H0.6 V10.4" fill="none" stroke="#0F6CBD" stroke-width="1.3"/><path d="M-0.8,-0.8 H4.8 V6.5 L2,9.4 L-0.8,6.5 Z" fill="#E8740C"/><circle cx="1.9" cy="3" r="1.1" fill="#fff"/><circle cx="17.5" cy="10.5" r="1.5" fill="#E8740C"/><circle cx="15.4" cy="15.4" r="2.5" fill="#E8740C"/></g>
<g transform="translate(1569,407)"><path d="M0.4,8.8 L7.3,0.4 L14.2,8.8 L7.3,17.3 Z" fill="#FAFAFA" stroke="#8B2F9A" stroke-width="1.1"/><path d="M3.6,8.8 L10.5,0.4 L17.6,8.8 L10.5,17.3 Z" fill="#FAFAFA" stroke="#8B2F9A" stroke-width="1.1"/><path d="M7,4.6 L14,13 M7,13 L14,4.6" stroke="#8B2F9A" stroke-width="1.1" fill="none"/></g>
<g transform="translate(1597,407)"><path d="M0,1.2 H12.1 L18,8.6 L12.1,15.6 H0 L5.1,8.3 Z" fill="#FAFAFA" stroke="#0F6CD8" stroke-width="1.2" stroke-linejoin="round"/><path d="M5.1,8.3 L11.8,1.4 M6.2,15.6 L13.5,6.5" stroke="#0F6CD8" stroke-width="1.1"/></g>
<g transform="translate(1625,407)"><circle cx="3.2" cy="8" r="1.1" fill="#7A4A1E"/><circle cx="8.9" cy="8" r="1.1" fill="#7A4A1E"/><circle cx="15.1" cy="8" r="1.1" fill="#7A4A1E"/></g>
</g>
</g><!--/VIZ-->
</svg>
<div class="a" style="left:0;top:124px;width:1918px;height:5px;background:linear-gradient(rgba(200,198,196,0.7),rgba(243,242,241,0))"></div>
</body></html>
